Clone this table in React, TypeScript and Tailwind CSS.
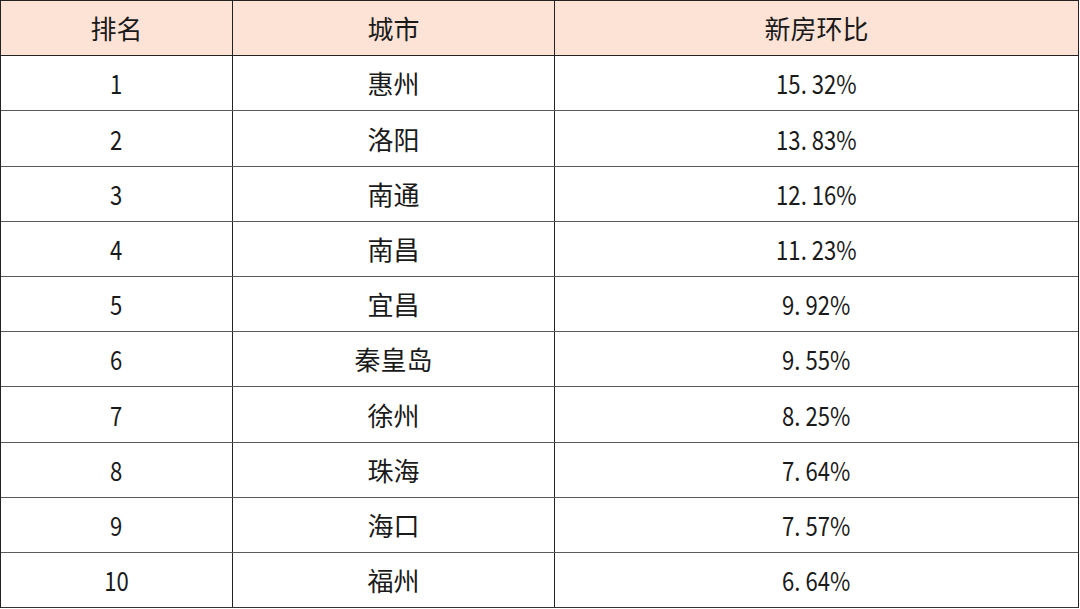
const rows = [
  { rank: '1', city: '惠州', ratio: '15. 32%' },
  { rank: '2', city: '洛阳', ratio: '13. 83%' },
  { rank: '3', city: '南通', ratio: '12. 16%' },
  { rank: '4', city: '南昌', ratio: '11. 23%' },
  { rank: '5', city: '宜昌', ratio: '9. 92%' },
  { rank: '6', city: '秦皇岛', ratio: '9. 55%' },
  { rank: '7', city: '徐州', ratio: '8. 25%' },
  { rank: '8', city: '珠海', ratio: '7. 64%' },
  { rank: '9', city: '海口', ratio: '7. 57%' },
  { rank: '10', city: '福州', ratio: '6. 64%' },
]

// rows 2 and 7 are a pixel taller so the lines land where the picture has them
const tall = [2, 7]

export default function App() {
  return (
    <div className="w-[1080px] h-[609px] bg-white overflow-hidden">
      <div
        className="w-[1079px] border-l border-t border-r border-[#222] text-[#1a1a1a] text-[26px]"
        style={{ fontFamily: '"Noto Sans CJK SC", "Noto Sans", sans-serif' }}
      >
        <div className="flex h-[55px] bg-[#fde3d6] border-b border-[#222]">
          <div className="w-[232px] flex items-center justify-center pb-[2px] border-r border-[#222]">排名</div>
          <div className="w-[322px] flex items-center justify-center pb-[2px] border-r border-[#222]">城市</div>
          <div className="flex-1 flex items-center justify-center pb-[2px]">新房环比</div>
        </div>
        {rows.map((r, i) => (
          <div
            key={r.rank}
            className={`flex border-b ${i === rows.length - 1 ? 'border-[#333]' : 'border-[#5a5a5a]'} ${
              tall.includes(i + 1) ? 'h-[56px]' : 'h-[55px]'
            }`}
          >
            <div className="w-[232px] flex items-center justify-center pb-[1px] border-r border-[#222]">
              <span className="inline-block scale-x-[0.85]">{r.rank}</span>
            </div>
            <div className="w-[322px] flex items-center justify-center pb-[1px] border-r border-[#222]">{r.city}</div>
            <div className="flex-1 flex items-center justify-center pb-[1px]">
              <span className="inline-block scale-x-[0.85]">{r.ratio}</span>
            </div>
          </div>
        ))}
      </div>
    </div>
  )
}
